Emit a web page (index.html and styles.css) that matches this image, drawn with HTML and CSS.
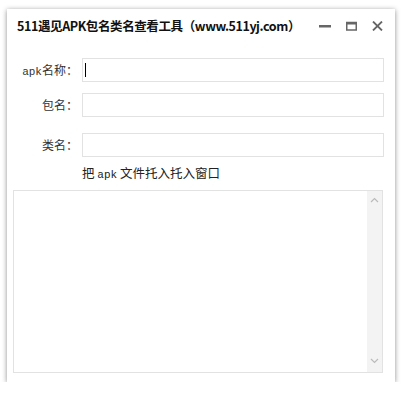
FILE: index.html
```html
<!DOCTYPE html>
<html lang="zh-CN">
<head>
    <meta charset="UTF-8">
    <meta name="viewport" content="width=device-width, initial-scale=1.0">
    <title>511遇见APK包名类名查看工具</title>
    <link rel="stylesheet" href="styles.css">
</head>
<body>
    <div class="window">
        <div class="titlebar">
            <div class="title">511遇见APK包名类名查看工具（www.511yj.com）</div>
            <div class="controls">
                <svg class="ctl" width="12" height="10" viewBox="0 0 12 10"><rect x="0" y="4" width="12" height="2.5" fill="#666"/></svg>
                <svg class="ctl" width="11" height="10" viewBox="0 0 11 10"><rect x="0.75" y="1.5" width="9.5" height="7.5" fill="none" stroke="#666" stroke-width="1.5"/><rect x="0" y="1" width="11" height="2.5" fill="#666"/></svg>
                <svg class="ctl" width="11" height="10" viewBox="0 0 11 10"><path d="M1 0.5 L10 9.5 M10 0.5 L1 9.5" stroke="#666" stroke-width="1.8"/></svg>
            </div>
        </div>

        <div class="form">
            <label class="label"><span class="mono">apk</span>名称：</label>
            <div class="field"><span class="caret"></span></div>

            <label class="label row2">包名：</label>
            <div class="field row2"></div>

            <label class="label row3">类名：</label>
            <div class="field row3"></div>

            <div class="hint">把 <span class="mono">apk</span> 文件托入托入窗口</div>
        </div>

        <div class="output">
            <div class="output-text"></div>
            <div class="scrollbar">
                <svg width="9" height="6" viewBox="0 0 9 6"><path d="M1 5 L4.5 1.5 L8 5" fill="none" stroke="#bbb" stroke-width="1.2"/></svg>
                <svg width="9" height="6" viewBox="0 0 9 6"><path d="M1 1 L4.5 4.5 L8 1" fill="none" stroke="#bbb" stroke-width="1.2"/></svg>
            </div>
        </div>
    </div>
</body>
</html>
```

FILE: styles.css
```css
body {
    margin: 0;
    background: #fff;
    font-family: "Noto Sans CJK SC", "Liberation Sans", sans-serif;
}
.window {
    margin: 9px 0 0 7px;
    width: 388px;
    height: 373px;
    background: #fff;
    box-shadow: 0 1px 5px rgba(0, 0, 0, 0.45);
    box-sizing: border-box;
    display: flex;
    flex-direction: column;
}
.titlebar {
    height: 32px;
    display: flex;
    align-items: center;
    padding: 0 12px 0 10px;
}
.title {
    flex: 1;
    font-size: 12.5px;
    font-weight: bold;
    color: #111;
    letter-spacing: -0.4px;
}
.controls {
    display: flex;
    align-items: center;
    gap: 15px;
    padding-top: 2px;
}
.ctl {
    display: block;
}
.form {
    display: grid;
    grid-template-columns: 71px 302px;
    column-gap: 4px;
    padding-top: 17px;
}
.label {
    display: block;
    text-align: right;
    height: 24px;
    line-height: 24px;
    font-size: 12px;
    color: #333;
    white-space: nowrap;
}
.mono {
    font-family: "Liberation Mono", monospace;
    font-size: 11px;
    line-height: 1;
}
.field {
    height: 24px;
    border: 1px solid #e2e2e2;
    box-sizing: border-box;
    position: relative;
}
.row2 {
    margin-top: 11px;
}
.row3 {
    margin-top: 16px;
}
.caret {
    position: absolute;
    left: 2px;
    top: 4px;
    width: 1px;
    height: 14px;
    background: #000;
}
.hint {
    grid-column: 2;
    font-size: 12.5px;
    color: #222;
    margin-top: 7px;
    height: 18px;
    line-height: 18px;
}
.output {
    margin: 8px 0 0 6px;
    width: 370px;
    height: 183px;
    border: 1px solid #e2e2e2;
    box-sizing: border-box;
    display: flex;
}
.output-text {
    flex: 1;
}
.scrollbar {
    width: 15px;
    background: #f3f3f3;
    display: flex;
    flex-direction: column;
    justify-content: space-between;
    align-items: center;
    padding: 6px 0 8px;
}
```
